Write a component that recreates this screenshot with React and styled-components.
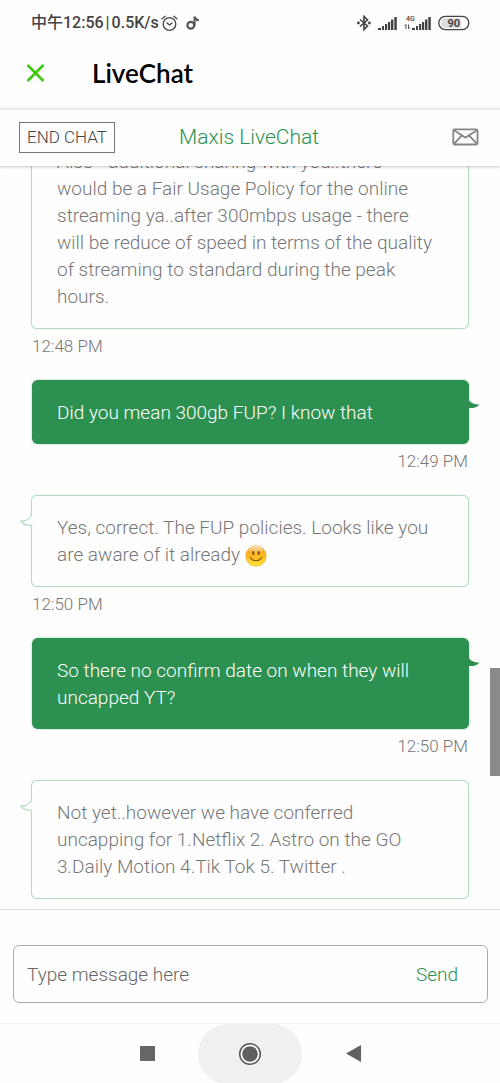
import React, { Fragment, useEffect, useRef, useState } from 'react';
import styled, { createGlobalStyle } from 'styled-components';

const GREEN = '#2c9150';
const BORDER_GREEN = '#b3dcc1';

const GlobalStyle = createGlobalStyle`
    * {
        box-sizing: border-box;
    }
    body {
        margin: 0;
        background: #fefefe;
        font-family: Roboto, 'Noto Sans CJK SC', sans-serif;
        font-weight: 300;
    }
    button, input {
        font: inherit;
        padding: 0;
        border: 0;
        background: transparent;
    }
    button {
        cursor: pointer;
    }
    svg {
        display: block;
    }
`;

const Screen = styled.div`
    display: flex;
    flex-direction: column;
    height: 100vh;
`;

const StatusBar = styled.div`
    display: flex;
    align-items: center;
    justify-content: space-between;
    height: 46px;
    padding: 0 30px 0 31px;
    color: #444;
    font-size: 16px;
    font-weight: 500;
    line-height: 20px;
`;

const StatusGroup = styled.div`
    display: flex;
    align-items: center;
    gap: ${props => props.$gap}px;
`;

const AppBar = styled.header`
    display: flex;
    align-items: center;
    gap: 46px;
    height: 62px;
    padding: 0 26px 9px;
`;

const AppTitle = styled.h1`
    margin: 0;
    color: #000;
    font-family: Lato, sans-serif;
    font-size: 26px;
    font-weight: 600;
`;

const ChatHeader = styled.div`
    position: relative;
    z-index: 1;
    display: grid;
    grid-template-columns: 1fr auto 1fr;
    align-items: center;
    height: 58px;
    padding: 0 21px 2px 19px;
    border-top: 2px solid #ebebeb;
    background: #fefefe;
    box-shadow: 0 1px 3px rgba(0, 0, 0, 0.22);
`;

const EndChatBtn = styled.button`
    justify-self: start;
    height: 31px;
    padding: 0 7px;
    border: 1px solid #777;
    color: #444;
    font-size: 17px;
`;

const ChatTitle = styled.h2`
    margin: 0;
    color: ${GREEN};
    font-size: 21px;
    font-weight: 300;
`;

const MailBtn = styled.button`
    justify-self: end;
`;

const ChatArea = styled.main`
    position: relative;
    flex: 1;
    min-height: 0;
`;

const MessageList = styled.div`
    height: 100%;
    padding: 24px 31px 0;
    overflow-y: auto;
    scrollbar-width: none;
`;

const ScrollThumb = styled.div`
    position: absolute;
    top: 67.6%;
    right: 0;
    width: 10px;
    height: 108px;
    background: #8a8a8a;
`;

const Bubble = styled.div`
    position: relative;
    margin-left: ${props => (props.$mine ? 1 : 0)}px;
    padding: ${props => (props.$mine ? '19px 25px 18px' : '18px 33px 18px 25px')};
    border: ${props => (props.$mine ? '0' : `1px solid ${BORDER_GREEN}`)};
    border-radius: 6px;
    background: ${props => (props.$mine ? GREEN : '#fefefe')};
    box-shadow: ${props => (props.$mine ? '0 0 2px rgba(44, 145, 80, 0.6)' : '0 0 1px #b3dcc1')};
    color: ${props => (props.$mine ? '#fff' : '#777')};
    font-size: 19px;
    line-height: 27px;
`;

const Tail = styled.svg`
    position: absolute;
    top: ${props => (props.$mine ? 18 : 17)}px;
    ${props => (props.$mine ? 'right: -11px;' : 'left: -12px;')}
`;

const Time = styled.div`
    margin: 6px 0 23px;
    padding: 0 1px;
    color: #777;
    font-size: 17px;
    line-height: 22px;
    text-align: ${props => (props.$mine ? 'right' : 'left')};
`;

const Emoji = styled.svg`
    display: inline-block;
    vertical-align: -6px;
`;

const Footer = styled.footer`
    position: relative;
    padding: 35px 12px 20px 13px;
    border-top: 1px solid #dedede;
    background: #fefefe;
`;

const Composer = styled.form`
    display: flex;
    align-items: center;
    height: 58px;
    padding: 0 29px 0 13px;
    border: 1px solid #aaa;
    border-radius: 6px;
`;

const MessageInput = styled.input`
    flex: 1;
    min-width: 0;
    outline: none;
    color: #555;
    font-size: 19px;

    &::placeholder {
        color: #666;
        opacity: 1;
    }
`;

const SendBtn = styled.button`
    color: ${GREEN};
    font-size: 19px;
`;

const NavBar = styled.nav`
    display: flex;
    align-items: center;
    justify-content: center;
    height: 60px;
    border-top: 1px solid #f2f2f2;
`;

const NavBtn = styled.button`
    display: flex;
    align-items: center;
    justify-content: center;
    width: ${props => (props.$home ? 104 : 102)}px;
    height: 60px;
    border-radius: 30px;
    background: ${props => (props.$home ? '#f0f0f0' : 'transparent')};
`;

const messages = [
    {
        text: 'Also - additional sharing with you..there would be a Fair Usage Policy for the online streaming ya..after 300mbps usage - there will be reduce of speed in terms of the quality of streaming to standard during the peak hours.',
        time: '12:48 PM',
    },
    { text: 'Did you mean 300gb FUP? I know that', time: '12:49 PM', mine: true },
    { text: 'Yes, correct. The FUP policies. Looks like you are aware of it already ', time: '12:50 PM', smile: true },
    { text: 'So there no confirm date on when they will uncapped YT?', time: '12:50 PM', mine: true },
    {
        text: 'Not yet..however we have conferred uncapping for 1.Netflix 2. Astro on the GO 3.Daily Motion 4.Tik Tok 5. Twitter .',
        time: '12:51 PM',
    },
];

const AlarmIcon = () => (
    <svg width="17" height="17" viewBox="0 0 17 17" fill="none" stroke="#444" strokeWidth="1.3" strokeLinecap="round">
        <circle cx="8.5" cy="9" r="6.3" />
        <path d="M1 3.8 4.2 1.2M16 3.8 12.8 1.2M6 8l2.5 2L11 8" />
    </svg>
);

const NoteIcon = () => (
    <svg width="14" height="16" viewBox="0 0 14 16" fill="none" stroke="#555">
        <circle cx="4.8" cy="10.2" r="3.4" strokeWidth="2.2" />
        <path d="M8.6 10.5V1.5" strokeWidth="2" />
        <path d="M8.6 2c.6 2 2 3 4.2 3.4" strokeWidth="2.4" />
    </svg>
);

const BluetoothIcon = () => (
    <svg width="14" height="16" viewBox="0 0 14 16" fill="none" stroke="#444" strokeWidth="1.6">
        <path d="M3 4.5 10.5 11 7 14.6V1.4L10.5 5 3 11.5" />
        <circle cx="1.4" cy="8" r="0.6" fill="#444" />
        <circle cx="12.4" cy="8" r="0.6" fill="#444" />
    </svg>
);

const SignalBars = () => (
    <g fill="#444">
        <rect x="0" y="11" width="3" height="2" />
        <rect x="4" y="9" width="2" height="4" />
        <rect x="7" y="7" width="2.2" height="6" />
        <rect x="10" y="5" width="2.2" height="8" />
        <rect x="13" y="2.5" width="2.4" height="10.5" />
        <rect x="16.3" y="0" width="2.5" height="13" />
    </g>
);

const SignalIcon = () => (
    <svg width="19" height="13" viewBox="0 0 19 13">
        <SignalBars />
    </svg>
);

const MobileSignalIcon = () => (
    <svg width="27" height="16" viewBox="0 0 27 16">
        <text x="2" y="6" fontSize="7" fontWeight="500" fill="#444">4G</text>
        <path d="M2 14V9.5L.7 11M4.5 9.5V14l1.3-1.5" fill="none" stroke="#444" strokeWidth="0.9" />
        <g transform="translate(8 2)">
            <SignalBars />
        </g>
    </svg>
);

const BatteryIcon = () => (
    <svg width="32" height="16" viewBox="0 0 32 16">
        <rect x="0.8" y="1.4" width="30" height="13.2" rx="6.6" fill="#fff" stroke="#444" strokeWidth="1.3" />
        <path d="M8 3h15v10H8a5 5 0 0 1 0-10z" fill="#ddd" />
        <text x="15.8" y="12" fontSize="11" fontWeight="700" fill="#444" textAnchor="middle">90</text>
    </svg>
);

const CloseIcon = () => (
    <svg width="20" height="20" viewBox="0 0 20 20" fill="none" stroke="#3cc80f" strokeWidth="2.5">
        <path d="M1.5 2 17.5 18M17.5 2 1.5 18" />
    </svg>
);

const MailIcon = () => (
    <svg width="27" height="18" viewBox="0 0 27 18" fill="none" stroke="#858585" strokeWidth="1.8">
        <rect x="1.3" y="1.3" width="24.2" height="15.2" rx="1.5" />
        <path d="M2 2.2 13.4 9.6 25 2.2M2 15.8 9.6 7.6M25 15.8 17.2 7.6" />
    </svg>
);

const BubbleTail = ({ mine }) => (
    mine ? (
        <Tail $mine width="12" height="12" viewBox="0 0 12 12" aria-hidden="true">
            <path d="M0 0C1 4 5 6.5 11.5 6.5 9 9.5 5 10.5 0 10z" fill={GREEN} />
        </Tail>
    ) : (
        <Tail width="13" height="14" viewBox="0 0 13 14" aria-hidden="true">
            <path d="M12.4 0C11.5 5 7 8 1 8.2 3.5 11.5 7.5 12.8 12.4 12.4z" fill="#fefefe" />
            <path d="M11.6 1C11 5 7 8 1 8.2 3.5 11.5 7.5 12.8 12.4 12.4" fill="none" stroke={BORDER_GREEN} strokeWidth="1.3" />
        </Tail>
    )
);

const Smile = () => (
    <Emoji width="22" height="22" viewBox="0 0 22 22" role="img" aria-label="smile">
        <defs>
            <linearGradient id="face" x1="0" y1="0" x2="0" y2="1">
                <stop offset="0" stopColor="#f2a01c" />
                <stop offset="0.5" stopColor="#fcb823" />
                <stop offset="1" stopColor="#ffea35" />
            </linearGradient>
            <linearGradient id="shine" x1="0" y1="0" x2="0" y2="1">
                <stop offset="0" stopColor="#fff" stopOpacity="0.7" />
                <stop offset="1" stopColor="#fff" stopOpacity="0" />
            </linearGradient>
        </defs>
        <circle cx="11" cy="11" r="10.3" fill="url(#face)" stroke="#e8a01a" strokeWidth="0.5" />
        <ellipse cx="11" cy="5" rx="7" ry="4" fill="url(#shine)" />
        <ellipse cx="8.3" cy="8" rx="1.1" ry="2" fill="#7a4a0a" />
        <ellipse cx="13.7" cy="8" rx="1.1" ry="2" fill="#7a4a0a" />
        <path d="M5.3 12.3c1.8 4.4 9.6 4.4 11.4 0" fill="none" stroke="#96580c" strokeWidth="1.2" strokeLinecap="round" />
    </Emoji>
);

const App = () => {
    const listRef = useRef(null);
    const [draft, setDraft] = useState('');

    useEffect(() => {
        const list = listRef.current;
        list.scrollTop = list.scrollHeight - list.clientHeight - 41;
    }, []);

    const handleSubmit = (event) => {
        event.preventDefault();
        setDraft('');
    };

    return (
        <Fragment>
            <GlobalStyle />
            <Screen>
                <StatusBar>
                    <StatusGroup $gap={8}>
                        <StatusGroup $gap={2}>
                            <StatusGroup $gap={0}>
                                <span>中午</span>
                                <span>12:56</span>
                            </StatusGroup>
                            <span>|</span>
                            <span>0.5K/s</span>
                            <AlarmIcon />
                        </StatusGroup>
                        <NoteIcon />
                    </StatusGroup>
                    <StatusGroup $gap={7}>
                        <BluetoothIcon />
                        <SignalIcon />
                        <MobileSignalIcon />
                        <BatteryIcon />
                    </StatusGroup>
                </StatusBar>
                <AppBar>
                    <button type="button" aria-label="Close"><CloseIcon /></button>
                    <AppTitle>LiveChat</AppTitle>
                </AppBar>
                <ChatHeader>
                    <EndChatBtn type="button">END CHAT</EndChatBtn>
                    <ChatTitle>Maxis LiveChat</ChatTitle>
                    <MailBtn type="button" aria-label="Email transcript"><MailIcon /></MailBtn>
                </ChatHeader>
                <ChatArea>
                    <MessageList ref={listRef}>
                        {messages.map((message, index) => (
                            <Fragment key={index}>
                                <Bubble $mine={message.mine}>
                                    <BubbleTail mine={message.mine} />
                                    {message.text}
                                    {message.smile && <Smile />}
                                </Bubble>
                                <Time $mine={message.mine}>{message.time}</Time>
                            </Fragment>
                        ))}
                    </MessageList>
                    <ScrollThumb />
                </ChatArea>
                <Footer>
                    <Composer onSubmit={handleSubmit}>
                        <MessageInput
                            type="text"
                            aria-label="Message"
                            placeholder="Type message here"
                            value={draft}
                            onChange={(event) => { setDraft(event.target.value); }}
                        />
                        <SendBtn type="submit">Send</SendBtn>
                    </Composer>
                </Footer>
                <NavBar>
                    <NavBtn type="button" aria-label="Recent apps">
                        <svg width="15" height="15"><rect width="15" height="15" fill="#666" /></svg>
                    </NavBtn>
                    <NavBtn type="button" aria-label="Home" $home>
                        <svg width="24" height="24" viewBox="0 0 24 24">
                            <circle cx="12" cy="12" r="10.3" fill="#fff" stroke="#555" strokeWidth="1.5" />
                            <circle cx="12" cy="12" r="7.8" fill="#606060" />
                        </svg>
                    </NavBtn>
                    <NavBtn type="button" aria-label="Back">
                        <svg width="15" height="17" viewBox="0 0 15 17"><path d="M15 0v17L0 8.5z" fill="#606060" /></svg>
                    </NavBtn>
                </NavBar>
            </Screen>
        </Fragment>
    );
};

export default App;
